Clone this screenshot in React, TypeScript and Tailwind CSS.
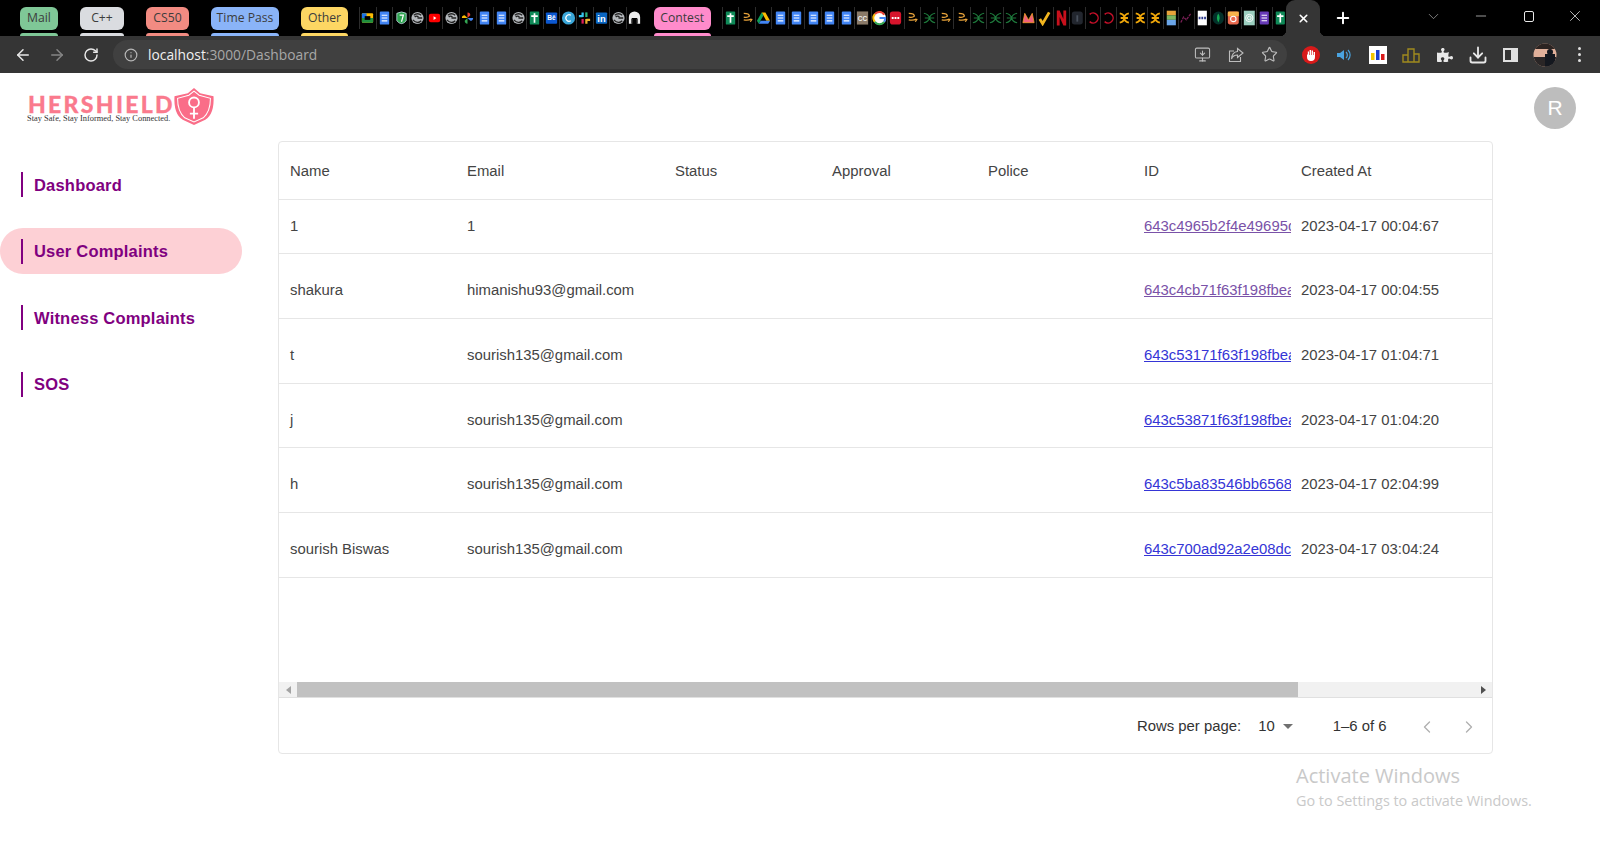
import { ArrowLeft, ArrowRight, ChevronDown, ChevronLeft, ChevronRight, Download, Info, Minus, MonitorDown, Plus, RotateCw, Star, X } from 'lucide-react';
import { FaPuzzlePiece } from 'react-icons/fa';

const sans = "font-['Liberation_Sans',Arial,sans-serif]";

type FavKind =
  | 'meet' | 'doc' | 'seven' | 'gh' | 'yt' | 'pin' | 'plus' | 'be' | 'canva' | 'slack' | 'in' | 'ear'
  | 'amz' | 'drive' | 'cc' | 'g' | 'nuf' | 'xg' | 'myn' | 'check' | 'n' | 'one' | 'o' | 'xo' | 'grid'
  | 'plot' | 'paper' | 'leaf' | 'insta' | 'finger' | 'list';

const favsLeft: FavKind[] = ['meet', 'doc', 'seven', 'gh', 'yt', 'gh', 'pin', 'doc', 'doc', 'gh', 'plus', 'be', 'canva', 'slack', 'in', 'gh', 'ear'];
const favsMid: FavKind[] = ['plus', 'amz', 'drive', 'doc', 'doc', 'doc', 'doc', 'doc', 'cc', 'g', 'nuf', 'amz', 'xg', 'amz', 'amz', 'xg', 'xg', 'xg', 'myn', 'check', 'n'];
const favsRight: FavKind[] = ['one', 'o', 'o', 'xo', 'xo', 'xo', 'grid', 'plot', 'paper', 'leaf', 'insta', 'finger', 'list', 'plus'];

function FavIcon({ kind }: { kind: FavKind }) {
  const lines = (bg: string) => (
    <>
      <rect x="3" y="1" width="10" height="14" rx="1" fill={bg} />
      <path d="M5 5h6M5 8h6M5 11h6" stroke="#fff" strokeWidth="1.2" />
    </>
  );
  switch (kind) {
    case 'meet':
      return (<><rect x="2" y="3" width="12" height="10" rx="1" fill="#fbbc04" /><path d="M2 8h12v4a1 1 0 0 1-1 1H3a1 1 0 0 1-1-1z" fill="#1e8e3e" /><path d="M2 3h5v5H2z" fill="#1a73e8" /><rect x="5" y="6" width="6" height="4" fill="#000" /></>);
    case 'doc':
      return lines('#4285f4');
    case 'seven':
      return (<><path d="M3 3q5-3 10 0v8q-5 6-10 0z" fill="#2ea44f" stroke="#cde" strokeWidth=".8" /><path d="M6 5h4l-2 7" stroke="#fff" strokeWidth="1.3" fill="none" /></>);
    case 'gh':
      return (<><circle cx="8" cy="8" r="6.500" fill="#b4b8bc" /><path d="M4 5q4-3 8 0M8 8h5M3 10q5 5 9 1M5 7q2-2 4 0" stroke="#222" strokeWidth="1.500" fill="none" /></>);
    case 'yt':
      return (<><rect x="2" y="3.500" width="12" height="9" rx="2" fill="#f00" /><path d="M7 6l3 2-3 2z" fill="#fff" /></>);
    case 'pin':
      return (<><path d="M8 8V2a3 3 0 0 1 3 3z" fill="#ea4335" /><path d="M8 8h6a3 3 0 0 1-3 3z" fill="#4285f4" /><path d="M8 8v6a3 3 0 0 1-3-3z" fill="#34a853" /><path d="M8 8H2a3 3 0 0 1 3-3z" fill="#fbbc04" /></>);
    case 'plus':
      return (<><rect x="3" y="1" width="10" height="14" rx="1" fill="#0f8a58" /><path d="M8 3v10M4.500 6h7" stroke="#fff" strokeWidth="1.800" /></>);
    case 'be':
      return (<><rect x="2" y="2" width="12" height="12" rx="1" fill="#0b57d0" /><text x="8" y="10.500" fontSize="7" fontWeight="700" fill="#fff" textAnchor="middle" fontFamily="Liberation Sans">Bē</text></>);
    case 'canva':
      return (<><circle cx="8" cy="8" r="7" fill="#3aa6d8" /><path d="M10.500 5a3.500 3.500 0 1 0 0 6" stroke="#fff" strokeWidth="1.300" fill="none" /></>);
    case 'slack':
      return (<><path d="M6 2v5M2 6h4" stroke="#36c5f0" strokeWidth="2.400" /><path d="M10 2v5" stroke="#2eb67d" strokeWidth="2.400" /><path d="M10 9v5M10 10h4" stroke="#ecb22e" strokeWidth="2.400" /><path d="M6 9v5" stroke="#e01e5a" strokeWidth="2.400" /></>);
    case 'in':
      return (<><rect x="2" y="2" width="12" height="12" rx="1" fill="#0a66c2" /><text x="8" y="12" fontSize="10" fontWeight="700" fill="#fff" textAnchor="middle" fontFamily="Liberation Sans">in</text></>);
    case 'ear':
      return (<><path d="M2 14V7a6 6 0 0 1 12 0v7h-3V8H5v6z" fill="#eee" /><path d="M5 9v5M11 9v5" stroke="#555" strokeWidth="1.500" /></>);
    case 'amz':
      return <path d="M4 3q6 0 6 3-2 2-6 1M4 10q5 1 8-1M11 12l2-3" stroke="#e8a33a" strokeWidth="1.400" fill="none" />;
    case 'drive':
      return (<><path d="M6 2h4l5 9H11z" fill="#fbbc04" /><path d="M6 2l-5 9 2 3 5-9z" fill="#0f9d58" /><path d="M3 14h10l2-3H5z" fill="#4285f4" /><path d="M6.500 10L8 7l1.500 3z" fill="#000" /></>);
    case 'cc':
      return (<><rect x="2" y="1" width="12" height="14" fill="#8a7a68" /><text x="8" y="11" fontSize="7" fontWeight="700" fill="#eee" textAnchor="middle" fontFamily="Liberation Sans">CC</text></>);
    case 'g':
      return (<><circle cx="8" cy="8" r="7" fill="#fff" /><path d="M13 4.500A6 6 0 0 0 3 4" stroke="#ea4335" strokeWidth="2.200" fill="none" /><path d="M3 4a6 6 0 0 0 0 8" stroke="#fbbc04" strokeWidth="2.200" fill="none" /><path d="M3 12a6 6 0 0 0 10 0" stroke="#34a853" strokeWidth="2.200" fill="none" /><path d="M8 8h6a6 6 0 0 1-1 4" stroke="#4285f4" strokeWidth="2.200" fill="none" /></>);
    case 'nuf':
      return (<><rect x="2" y="1" width="12" height="14" rx="3" fill="#d7142c" /><path d="M4 8h8" stroke="#fff" strokeWidth="2" strokeDasharray="2 1" /></>);
    case 'xg':
      return <path d="M2 3q5 1 6 5T14 13M14 3q-5 1-6 5t-6 5M3 8h10" stroke="#1e7a3c" strokeWidth="1.200" fill="none" />;
    case 'xo':
      return <path d="M3 3q5 1 5 5t-5 5M13 3q-5 1-5 5t5 5M4 8h8" stroke="#f0a70a" strokeWidth="2" fill="none" />;
    case 'myn':
      return <path d="M2 13l2-10 4 7 4-7 2 10z" fill="#f0607a" stroke="#f5a623" strokeWidth=".8" />;
    case 'check':
      return <path d="M3 9l3 5 7-12" stroke="#f2b51f" strokeWidth="3" fill="none" />;
    case 'n':
      return <path d="M3 0h3l4 9V0h3v16h-3L6 7v9H3z" fill="#c8101c" />;
    case 'one':
      return (<><rect x="2" y="1" width="12" height="14" rx="3" fill="#22262e" /><path d="M8 5v7" stroke="#48505c" strokeWidth="2" /></>);
    case 'o':
      return <path d="M4 4a5.500 5.500 0 1 1 0 8" stroke="#c9102a" strokeWidth="1.600" fill="none" />;
    case 'grid':
      return (<><rect x="3" y="0" width="10" height="5" fill="#e8a33a" /><rect x="3" y="5" width="10" height="5" fill="#7db660" /><rect x="3" y="10" width="10" height="6" fill="#6aa5e8" /></>);
    case 'plot':
      return <path d="M2 13l3-6 3 3 5-7" stroke="#7a1f56" strokeWidth="1.400" fill="none" strokeDasharray="3 1" />;
    case 'paper':
      return (<><rect x="3" y="0" width="10" height="16" fill="#fff" /><path d="M4 8h8" stroke="#2e3a8c" strokeWidth="2.500" strokeDasharray="2 1" /></>);
    case 'leaf':
      return (<><rect x="2" y="1" width="12" height="14" rx="6" fill="#03312a" /><path d="M8 3q3 4 0 10-3-6 0-10" fill="#13aa52" /></>);
    case 'insta':
      return (<><rect x="2" y="1" width="12" height="14" rx="2" fill="#e96a4f" /><rect x="2" y="1" width="12" height="5" fill="#f7b34c" /><circle cx="8" cy="9" r="3" fill="none" stroke="#fff" strokeWidth="1.200" /></>);
    case 'finger':
      return (<><rect x="2" y="0" width="12" height="16" fill="#9ccfc0" /><circle cx="8" cy="8" r="4" fill="none" stroke="#fff" /><circle cx="8" cy="8" r="2" fill="none" stroke="#fff" /></>);
    case 'list':
      return (<><rect x="3" y="1" width="10" height="14" rx="1" fill="#673ab7" /><path d="M5 5h6M5 8h6M5 11h6" stroke="#fff" strokeWidth="1.200" /></>);
  }
}

function FavStrip({ items, itemClass }: { items: FavKind[]; itemClass: string }) {
  return (
    <div className="flex h-[22px]">
      {items.map((kind, i) => (
        <div key={i} className={`${itemClass} flex h-[22px] items-center justify-center border-l border-[#2c2c2c]`}>
          <svg viewBox="0 0 16 16" className="h-[16px] w-[15px]">
            <FavIcon kind={kind} />
          </svg>
        </div>
      ))}
    </div>
  );
}

function GroupPill({ label, color, width, ml }: { label: string; color: string; width: string; ml: string }) {
  return (
    <div className={`${width} ${ml} flex h-[36px] shrink-0 flex-col justify-between pt-[7px]`}>
      <div className={`${color} flex h-[23px] items-center justify-center rounded-[6px] font-['Open_Sans',sans-serif] text-[12.2px] text-[#3c3c3c]`}>{label}</div>
      <div className={`${color} h-[3px] rounded-t-[3px]`} />
    </div>
  );
}

function TabStrip() {
  return (
    <div className="flex h-[36px] items-start bg-black pl-[20px]">
      <GroupPill label="Mail" color="bg-[#7fc797]" width="w-[38px]" ml="ml-0" />
      <GroupPill label="C++" color="bg-[#dadce0]" width="w-[44px]" ml="ml-[22px]" />
      <GroupPill label="CS50" color="bg-[#f28b82]" width="w-[43px]" ml="ml-[22px]" />
      <GroupPill label="Time Pass" color="bg-[#8ab4f8]" width="w-[68px]" ml="ml-[22px]" />
      <GroupPill label="Other" color="bg-[#fdd663]" width="w-[47px]" ml="ml-[22px]" />
      <div className="ml-[11px] mt-[7px]">
        <FavStrip items={favsLeft} itemClass="w-[16.7px]" />
      </div>
      <GroupPill label="Contest" color="bg-[#ff8bcb]" width="w-[57px]" ml="ml-[11px]" />
      <div className="ml-[11px] mt-[7px] flex">
        <FavStrip items={favsMid} itemClass="w-[16.55px]" />
        <FavStrip items={favsRight} itemClass="w-[15.6px]" />
      </div>
      <div className="relative ml-[-1px] flex h-[36px] w-[34px] shrink-0 items-center justify-center rounded-t-[9px] bg-[#353535]">
        <span className="absolute bottom-0 left-[-6px] h-[6px] w-[6px] bg-[radial-gradient(circle_at_0_0,#000_6px,#353535_6.5px)]" />
        <span className="absolute bottom-0 right-[-6px] h-[6px] w-[6px] bg-[radial-gradient(circle_at_100%_0,#000_6px,#353535_6.5px)]" />
        <X size={13} strokeWidth={3} className="text-white" />
      </div>
      <div className="ml-[14px] flex h-[36px] w-[18px] items-center justify-center">
        <Plus size={18} strokeWidth={2.600} className="text-white" />
      </div>
      <div className="ml-[71px] flex h-[32px] w-[20px] items-center justify-center">
        <ChevronDown size={17} strokeWidth={1} className="text-[#b0b0b0]" />
      </div>
      <div className="ml-[28px] flex h-[32px] w-[20px] items-center justify-center">
        <Minus size={16} strokeWidth={1} className="text-[#e8e8e8]" />
      </div>
      <div className="ml-[28px] flex h-[32px] w-[20px] items-center justify-center">
        <span className="h-[11px] w-[10px] rounded-[2px] border border-[#e8e8e8]" />
      </div>
      <div className="ml-[26px] flex h-[32px] w-[20px] items-center justify-center">
        <X size={18} strokeWidth={1} className="text-[#f0f0f0]" />
      </div>
    </div>
  );
}

function Toolbar() {
  return (
    <div className="flex h-[37px] items-center bg-[#353535]">
      <div className="flex w-[113px] items-center pl-[14px]">
        <ArrowLeft size={18} strokeWidth={2} className="text-[#e8e8e8]" />
        <ArrowRight size={18} strokeWidth={2} className="ml-[16px] text-[#858585]" />
        <RotateCw size={16} strokeWidth={2.200} className="ml-[17px] text-[#e8e8e8]" />
      </div>
      <div className={`flex h-[29px] w-[1174px] items-center rounded-full bg-[#404040] pl-[11px] pr-[9px] ${sans}`}>
        <Info size={14} className="text-[#b8b8b8]" />
        <div className="ml-[10px] mt-[1px] font-['Open_Sans',sans-serif] text-[13.8px]">
          <span className="text-[#f0f0f0]">localhost</span>
          <span className="text-[#a8a8a8]">:3000/Dashboard</span>
        </div>
        <div className="ml-auto flex items-center gap-[17px] text-[#bdbdbd]">
          <MonitorDown size={17} strokeWidth={1.500} />
          <svg viewBox="0 0 16 16" className="h-[16px] w-[16px]" fill="none" stroke="currentColor" strokeWidth="1.100">
            <path d="M6 4H1.500v10.500h11V10" />
            <path d="M9.500 1.500L15 6l-5.500 4.500V8Q5 8 3.500 12 4 5 9.500 4.500z" />
          </svg>
          <Star size={17} strokeWidth={1.600} />
        </div>
      </div>
      <div className="ml-[14px] flex items-center gap-[13.4px]">
        <svg viewBox="0 0 20 20" className="h-[20px] w-[20px]">
          <circle cx="10" cy="10" r="9" fill="#d81a1a" />
          <path d="M6 9v3a4 4 0 0 0 8 0V7h-1.400v3h-.6V5.500h-1.400V10h-.6V5h-1.400v5H8V6.500H6.800V10z" fill="#fff" />
        </svg>
        <svg viewBox="0 0 20 20" className="h-[20px] w-[20px]">
          <path d="M3 8h3l4-3v10l-4-3H3z" fill="#4aa3e0" />
          <path d="M12 7a4 4 0 0 1 0 6M14 5a7 7 0 0 1 0 10" stroke="#4aa3e0" strokeWidth="1.200" fill="none" />
        </svg>
        <svg viewBox="0 0 20 20" className="h-[20px] w-[20px]">
          <rect x="1" y="1" width="18" height="18" fill="#fff" />
          <rect x="3" y="8" width="3.500" height="7" fill="#f2c500" />
          <rect x="8" y="5" width="3.500" height="10" fill="#1a3fd0" />
          <rect x="13" y="9" width="3.500" height="6" fill="#d81a1a" />
        </svg>
        <svg viewBox="0 0 20 20" className="h-[20px] w-[20px]">
          <path d="M2 17v-7h5v7zM7 17V4h6v13zM13 17v-8h5v8z" stroke="#a08a1e" strokeWidth="1.400" fill="none" />
        </svg>
        <div className="flex h-[20px] w-[20px] items-center justify-center">
          <FaPuzzlePiece size={16} className="text-[#e8e8e8]" />
        </div>
        <Download size={20} strokeWidth={2.200} className="text-[#e8e8e8]" />
        <svg viewBox="0 0 20 20" className="h-[20px] w-[20px]">
          <rect x="2" y="3" width="15" height="14" fill="#e0e0e0" />
          <rect x="4" y="5" width="6" height="10" fill="#353535" />
        </svg>
        <svg viewBox="0 0 24 24" className="ml-[-2px] h-[24px] w-[24px]">
          <defs>
            <clipPath id="av">
              <circle cx="12" cy="12" r="11.500" />
            </clipPath>
          </defs>
          <g clipPath="url(#av)">
            <rect width="24" height="24" fill="#e0b09a" />
            <rect y="0" width="24" height="6" fill="#2c2422" />
            <rect y="14" width="24" height="10" fill="#2a2626" />
            <circle cx="17" cy="9" r="3" fill="#14181f" />
            <rect x="12" y="11" width="10" height="13" fill="#14181f" />
          </g>
        </svg>
        <div className="flex w-[18px] flex-col items-center gap-[3px]">
          <span className="h-[3px] w-[3px] rounded-full bg-[#e0e0e0]" />
          <span className="h-[3px] w-[3px] rounded-full bg-[#e0e0e0]" />
          <span className="h-[3px] w-[3px] rounded-full bg-[#e0e0e0]" />
        </div>
      </div>
    </div>
  );
}

function Logo() {
  return (
    <div className="flex items-start pl-[27px] pt-[15px]">
      <div className="flex w-[146px] flex-col pt-[6px]">
        <div className="pl-[1px] font-['Lato',sans-serif] text-[23px] font-black leading-[20px] tracking-[2.300px] text-[#fa7a8d] [-webkit-text-stroke:0.3px_#fa7a8d]">HERSHIELD</div>
        <div className="whitespace-nowrap font-['Liberation_Serif',serif] text-[8.4px] leading-[9px] text-[#333]">Stay Safe, Stay Informed, Stay Connected.</div>
      </div>
      <svg viewBox="0 0 40 36" className="h-[37px] w-[42px]">
        <path d="M20 0l6 5 13 3q1 17-8 23l-11 5-11-5Q0 25 1 8l13-3z" fill="#fa6d88" />
        <path d="M20 3l-5 4-11 3q0 13 7 19l9 4 9-4q7-6 7-19l-11-3z" fill="none" stroke="#fff" strokeWidth="1" />
        <circle cx="20" cy="14" r="4.800" fill="none" stroke="#fff" strokeWidth="1.800" />
        <path d="M20 19v11M16 25h8" stroke="#fff" strokeWidth="1.800" />
      </svg>
    </div>
  );
}

const navItems = [
  { label: 'Dashboard', active: false },
  { label: 'User Complaints', active: true },
  { label: 'Witness Complaints', active: false },
  { label: 'SOS', active: false },
];

function Sidebar() {
  return (
    <div className={`flex w-[278px] shrink-0 flex-col gap-[20.6px] pt-[20.500px] ${sans}`}>
      {navItems.map(item => (
        <div
          key={item.label}
          className={`flex h-[46px] w-[242px] items-center rounded-full pl-[21px] ${item.active ? 'bg-[#fdd0d5]' : ''}`}
        >
          <span className="h-[25px] w-[2px] bg-[#800080]" />
          <span className="ml-[11px] mt-[1px] text-[16.5px] font-bold tracking-[0.2px] text-[#800080]">{item.label}</span>
        </div>
      ))}
    </div>
  );
}

const gridCols = 'grid grid-cols-[178px_208px_157px_156px_156px_157px_1fr]';
const cell = 'truncate pl-[10px] first:pl-[11px]';

const rows = [
  { name: '1', email: '1', id: '643c4965b2f4e49695d1', at: '2023-04-17 00:04:67', link: 'text-[#7a52a8]', h: 'h-[54px]' },
  { name: 'shakura', email: 'himanishu93@gmail.com', id: '643c4cb71f63f198fbea1', at: '2023-04-17 00:04:55', link: 'text-[#7a52a8]', h: 'h-[65px] pt-[9px]' },
  { name: 't', email: 'sourish135@gmail.com', id: '643c53171f63f198fbea2', at: '2023-04-17 01:04:71', link: 'text-[#3535d6]', h: 'h-[65px] pt-[8px]' },
  { name: 'j', email: 'sourish135@gmail.com', id: '643c53871f63f198fbea3', at: '2023-04-17 01:04:20', link: 'text-[#3535d6]', h: 'h-[64px] pt-[9px]' },
  { name: 'h', email: 'sourish135@gmail.com', id: '643c5ba83546bb65681a', at: '2023-04-17 02:04:99', link: 'text-[#3535d6]', h: 'h-[65px] pt-[8px]' },
  { name: 'sourish Biswas', email: 'sourish135@gmail.com', id: '643c700ad92a2e08dc1b', at: '2023-04-17 03:04:24', link: 'text-[#3535d6]', h: 'h-[65px] pt-[9px]' },
];

function ComplaintsTable() {
  return (
    <div className={`flex h-[613px] w-[1215px] flex-col rounded-[4px] border border-[#e6e6e6] text-[14.88px] text-[#444] ${sans}`}>
      <div className={`${gridCols} h-[58px] shrink-0 items-center border-b border-[#e6e6e6] pt-[2px]`}>
        {['Name', 'Email', 'Status', 'Approval', 'Police', 'ID', 'Created At'].map(h => (
          <div key={h} className={cell}>{h}</div>
        ))}
      </div>
      <div className="flex-1">
        {rows.map(r => (
          <div key={r.id} className={`${gridCols} ${r.h} items-center border-b border-[#e6e6e6]`}>
            <div className={cell}>{r.name}</div>
            <div className={cell}>{r.email}</div>
            <div />
            <div />
            <div />
            <div className="overflow-hidden whitespace-nowrap pl-[10px]">
              <a href="#" className={`${r.link} underline`}>{r.id}</a>
            </div>
            <div className={cell}>{r.at}</div>
          </div>
        ))}
      </div>
      <div className="flex h-[16px] shrink-0 items-center border-b border-[#e0e0e0] bg-[#f1f1f1]">
        <div className="flex w-[18px] justify-center">
          <span className="h-0 w-0 border-y-[4px] border-r-[5px] border-y-transparent border-r-[#a3a3a3]" />
        </div>
        <div className="h-[15px] w-[1001px] bg-[#c1c1c1]" />
        <div className="ml-auto flex w-[18px] justify-center">
          <span className="h-0 w-0 border-y-[4px] border-l-[5px] border-y-transparent border-l-[#505050]" />
        </div>
      </div>
      <div className="flex h-[55px] shrink-0 items-center pt-[2px] text-[#333]">
        <span className="ml-[858px]">Rows per page:</span>
        <span className="ml-[17px]">10</span>
        <span className="ml-[8px] h-0 w-0 border-x-[5px] border-t-[5px] border-x-transparent border-t-[#707070]" />
        <span className="ml-[40px]">1–6 of 6</span>
        <ChevronLeft size={20} strokeWidth={1.600} className="ml-[30px] text-[#b0b0b0]" />
        <ChevronRight size={20} strokeWidth={1.600} className="ml-[22px] text-[#b0b0b0]" />
      </div>
    </div>
  );
}

export default function App() {
  return (
    <div className="relative h-[850px] w-[1600px] overflow-hidden bg-white">
      <TabStrip />
      <Toolbar />
      <div className="flex h-[68px] items-start justify-between">
        <Logo />
        <div className={`mr-[24px] mt-[14px] flex h-[42px] w-[42px] items-center justify-center rounded-full bg-[#bdbdbd] text-[21px] text-white ${sans}`}>R</div>
      </div>
      <div className="flex">
        <Sidebar />
        <ComplaintsTable />
      </div>
      <div className="pointer-events-none absolute left-[1296px] top-[762px] font-['Open_Sans',sans-serif] text-[#c9c9c9]">
        <div className="text-[20px] leading-[27px]">Activate Windows</div>
        <div className="text-[14.4px] leading-[23px]">Go to Settings to activate Windows.</div>
      </div>
    </div>
  );
}
